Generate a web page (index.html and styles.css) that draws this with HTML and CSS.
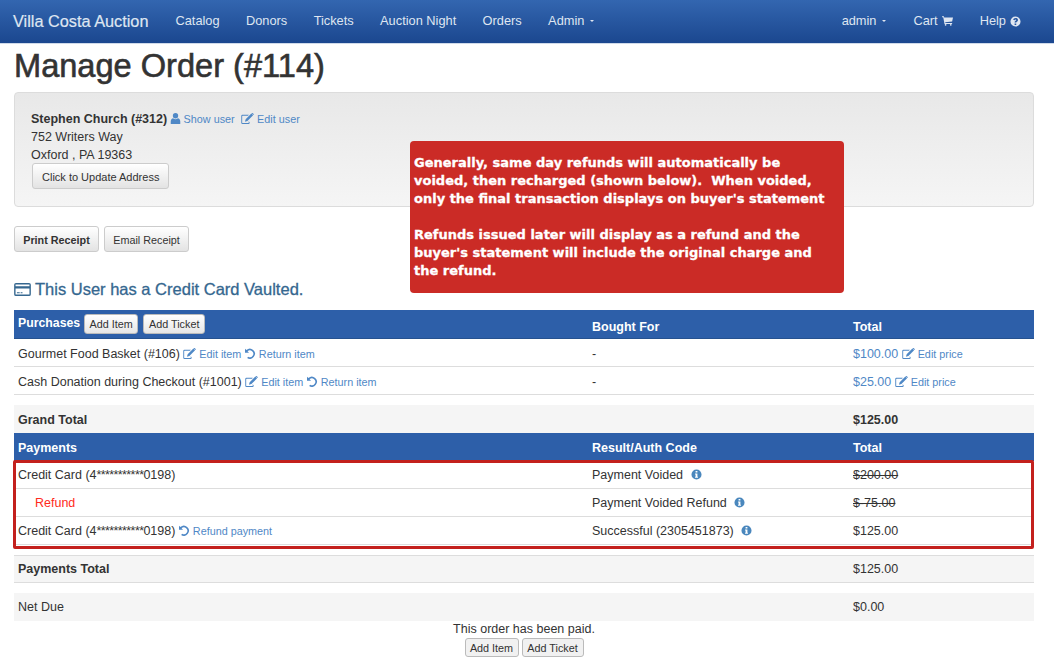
FILE: index.html
```html
<!DOCTYPE html>
<html lang="en">
<head>
<meta charset="utf-8">
<title>Manage Order (#114)</title>
<link rel="stylesheet" href="styles.css">
</head>
<body>
<svg class="defs" width="0" height="0" aria-hidden="true">
  <symbol id="i-user" viewBox="0 0 12 12"><circle cx="6" cy="3" r="2.9"/><path d="M.8 12V9.2C.8 7.2 2 6 3.4 5.7c.7.6 1.6 1 2.6 1s1.900-.4 2.600-1C10 6 11.200 7.200 11.200 9.200V12z"/></symbol>
  <symbol id="i-edit" viewBox="0 0 14 12"><path d="M9.300 10.100V11a1 1 0 0 1-1 1H1.500a1.300 1.300 0 0 1-1.300-1.300V3.300A1.300 1.300 0 0 1 1.500 2h7l-1 1H1.800a.6.6 0 0 0-.6.6v6.800c0 .4.300.6.600.6h6c.3 0 .5-.2.500-.5V9.100z"/><path d="M11.200.6l1.900 1.900-6.200 6.200-2.700.8.800-2.700zM11.800 0c.3-.2.600-.2.800 0l1.100 1.100c.3.300.3.600 0 .8l-.3.300-1.900-1.900z"/></symbol>
  <symbol id="i-undo" viewBox="0 0 12 12"><path d="M0 .8v4.400h4.400L2.800 3.600A3.700 3.700 0 1 1 3.500 9.500L2.300 10.900A5.500 5.500 0 1 0 1.500 2.300z"/></symbol>
  <symbol id="i-info" viewBox="0 0 12 12"><path fill-rule="evenodd" d="M6 .5a5.500 5.500 0 1 1 0 11 5.500 5.500 0 0 1 0-11zM5 2.200v1.700h2V2.200zM4.400 5v1.100H5v2.300h-.6v1.100h3.200V8.400H7V5z"/></symbol>
  <symbol id="i-help" viewBox="0 0 12 12"><path fill-rule="evenodd" d="M6 .5a5.500 5.500 0 1 1 0 11 5.500 5.500 0 0 1 0-11zM5 8.300v1.500h1.800V8.300zM6.100 2.200c-1.500 0-2.400.8-2.600 2l1.500.4c.1-.6.400-.9 1-.9.500 0 .8.300.8.600 0 .4-.3.600-.8.900-.7.400-1 .9-1 1.600v.400h1.800c0-.5.200-.7.700-1 .7-.5 1.200-1 1.200-1.900 0-1.400-1.200-2.100-2.600-2.100z"/></symbol>
  <symbol id="i-cart" viewBox="0 0 14 12"><path d="M0 0h2.400l.4 1.400H14l-1.100 5.300-8.800.9.200 1h8.600v1.100H3.200L1.600 1.100H0z"/><circle cx="4.600" cy="10.900" r="1.100"/><circle cx="11.200" cy="10.900" r="1.100"/></symbol>
  <symbol id="i-card" viewBox="0 0 18 14"><path fill-rule="evenodd" d="M2 0h14a2 2 0 0 1 2 2v10a2 2 0 0 1-2 2H2a2 2 0 0 1-2-2V2a2 2 0 0 1 2-2zM1.500 1.500V3.500h15V1.500zM1.500 6v6.500h15V6zM3 10h3v1H3zM7 10h2v1H7z"/></symbol>
</svg>

<header class="navbar">
  <a class="brand">Villa Costa Auction</a>
  <nav class="nav-main">
    <a>Catalog</a>
    <a>Donors</a>
    <a>Tickets</a>
    <a>Auction Night</a>
    <a>Orders</a>
    <a>Admin <i class="caret"></i></a>
  </nav>
  <nav class="nav-right">
    <a>admin <i class="caret"></i></a>
    <a>Cart <svg class="nav-ic nav-cart"><use href="#i-cart"/></svg></a>
    <a>Help <svg class="nav-ic"><use href="#i-help"/></svg></a>
  </nav>
</header>

<main class="page">
  <h1>Manage Order (#114)</h1>

  <section class="well">
    <div><strong class="buyer">Stephen Church (#312)</strong> <a class="link"><svg class="ic"><use href="#i-user"/></svg> Show user</a> <a class="link link-gap"><svg class="ic ic-edit"><use href="#i-edit"/></svg> Edit user</a></div>
    <div>752 Writers Way</div>
    <div>Oxford , PA 19363</div>
    <button class="btn btn-address">Click to Update Address</button>
  </section>

  <div class="receipt-actions">
    <button class="btn btn-receipt btn-bold">Print Receipt</button>
    <button class="btn btn-receipt">Email Receipt</button>
  </div>

  <h4 class="vaulted"><svg class="ic-card"><use href="#i-card"/></svg> This User has a Credit Card Vaulted.</h4>

  <table class="order">
    <colgroup><col class="c1"><col class="c2"><col class="c3"></colgroup>
    <tr class="head head-first">
      <th><div class="purchases"><span class="purchases-label">Purchases</span> <button class="btn btn-xs">Add Item</button> <button class="btn btn-xs">Add Ticket</button></div></th>
      <th>Bought For</th>
      <th>Total</th>
    </tr>
    <tr class="low">
      <td>Gourmet Food Basket (#106) <a class="link"><svg class="ic ic-edit"><use href="#i-edit"/></svg> Edit item</a> <a class="link"><svg class="ic"><use href="#i-undo"/></svg> Return item</a></td>
      <td>-</td>
      <td><a class="price">$100.00</a> <a class="link"><svg class="ic ic-edit"><use href="#i-edit"/></svg> Edit price</a></td>
    </tr>
    <tr class="low">
      <td>Cash Donation during Checkout (#1001) <a class="link"><svg class="ic ic-edit"><use href="#i-edit"/></svg> Edit item</a> <a class="link"><svg class="ic"><use href="#i-undo"/></svg> Return item</a></td>
      <td>-</td>
      <td><a class="price">$25.00</a> <a class="link"><svg class="ic ic-edit"><use href="#i-edit"/></svg> Edit price</a></td>
    </tr>
    <tr class="spacer"><td colspan="3"></td></tr>
    <tr class="total bold no-line low">
      <td>Grand Total</td><td></td><td>$125.00</td>
    </tr>
    <tr class="head low">
      <th>Payments</th><th>Result/Auth Code</th><th>Total</th>
    </tr>
    <tr>
      <td>Credit Card (4<span class="mask">***********</span>0198)</td>
      <td>Payment Voided <svg class="ic ic-info"><use href="#i-info"/></svg></td>
      <td><s>$200.00</s></td>
    </tr>
    <tr>
      <td class="refund">Refund</td>
      <td>Payment Voided Refund <svg class="ic ic-info"><use href="#i-info"/></svg></td>
      <td><s>$-75.00</s></td>
    </tr>
    <tr>
      <td>Credit Card (4<span class="mask">***********</span>0198) <a class="link"><svg class="ic"><use href="#i-undo"/></svg> Refund payment</a></td>
      <td>Successful (2305451873) <svg class="ic ic-info"><use href="#i-info"/></svg></td>
      <td>$125.00</td>
    </tr>
    <tr class="spacer"><td colspan="3"></td></tr>
    <tr class="total">
      <td class="bold-cell">Payments Total</td><td></td><td>$125.00</td>
    </tr>
    <tr class="spacer"><td colspan="3"></td></tr>
    <tr class="total no-line">
      <td>Net Due</td><td></td><td>$0.00</td>
    </tr>
  </table>

  <div class="paid">
    <div class="paid-note">This order has been paid.</div>
    <div class="paid-actions">
      <button class="btn btn-xs btn-flat">Add Item</button>
      <button class="btn btn-xs btn-flat">Add Ticket</button>
    </div>
  </div>
</main>

<aside class="callout">
  <p>Generally, same day refunds will automatically be voided, then recharged (shown below).&nbsp; When voided, only the final transaction displays on buyer's statement</p>
  <p>Refunds issued later will display as a refund and the buyer's statement will include the original charge and the refund.</p>
</aside>
<div class="highlight"></div>
</body>
</html>
```

FILE: styles.css
```css
* { box-sizing: border-box; }
html, body { margin: 0; padding: 0; }
body {
  position: relative;
  height: 657px;
  overflow: hidden;
  background: #fff;
  color: #333;
  font: 12.5px/18px "Liberation Sans", Arial, sans-serif;
}
.defs { position: absolute; }
a { text-decoration: none; }

.navbar {
  display: flex;
  align-items: center;
  height: 44px;
  padding: 0 20px 1px 13px;
  background: linear-gradient(#3366b0, #1b478f);
  border-bottom: 1px solid #cfdaea;
  color: #dfe6f1;
  font-size: 12.8px;
}
.brand { font-size: 16.3px; margin-right: 27px; -webkit-text-stroke: .2px #dfe6f1; }
.nav-main { display: flex; gap: 26.4px; }
.nav-right { display: flex; gap: 27px; margin-left: auto; margin-right: 13px; }
.navbar nav a { display: inline-flex; align-items: center; gap: 4px; }
.caret {
  display: inline-block;
  margin-left: 2px;
  border-top: 2.500px solid #dfe6f1;
  border-left: 2.500px solid transparent;
  border-right: 2.500px solid transparent;
}
.nav-ic { width: 11px; height: 11px; fill: #dfe6f1; }
.nav-cart { height: 10px; }

.page { padding: 0 20px 0 14px; }
h1 {
  margin: 0;
  height: 48px;
  font-size: 32.6px;
  font-weight: 500;
  line-height: 44px;
  color: #333;
  -webkit-text-stroke: .6px #333;
}
.well {
  height: 115px;
  padding: 17px 16px 0 16px;
  background: linear-gradient(#e8e8e8, #f5f5f5);
  border: 1px solid #dcdcdc;
  border-radius: 4px;
}
.buyer { margin-right: -1px; }
.btn {
  font: 11px/14px "Liberation Sans", Arial, sans-serif;
  color: #333;
  padding: 6px 9px 4px;
  height: 26px;
  background: linear-gradient(#fff, #e3e3e3);
  border: 1px solid #ccc;
  border-radius: 3px;
}
.btn-address { display: block; margin: -1px 0 0 1px; }
.btn-receipt { width: 85px; padding: 6px 0 4px; font-size: 10.8px; }
.btn-bold { font-weight: bold; }
.receipt-actions { display: flex; gap: 5px; margin-top: 19px; }
.vaulted {
  display: flex;
  align-items: center;
  gap: 4px;
  margin: 27px 0 11px;
  height: 20px;
  font-size: 16.5px;
  font-weight: 500;
  line-height: 20px;
  color: #35678f;
  -webkit-text-stroke: .3px #35678f;
}
.ic-card { width: 17px; height: 13px; fill: #35678f; }

.link { font-size: 10.8px; color: #4f88c6; }
.link-gap { margin-left: 3px; }
.ic { width: 11px; height: 11px; fill: #4f88c6; vertical-align: -1px; }
.ic-edit { width: 13px; height: 11px; }
.ic-info { margin-left: 4px; fill: #4a87bd; }
.price { color: #4f88c6; }
.mask { letter-spacing: -.6px; }

.order {
  width: 1020px;
  table-layout: fixed;
  border-collapse: separate;
  border-spacing: 0;
}
.c1 { width: 574px; }
.c2 { width: 261px; }
.c3 { width: 185px; }
.order th, .order td {
  height: 28px;
  padding: 0 4px;
  text-align: left;
  border-bottom: 1px solid #ddd;
}
.order th { font-weight: bold; vertical-align: middle; }
.order .low td, .order .low th { padding-top: 2px; }
.head th {
  color: #fff;
  background: #2d5fa9;
  border-bottom: 1px solid #26528f;
}
.order .head-first th { height: 29px; padding-top: 5px; }
.order .head-first th:first-child { padding-top: 0; }
.purchases { display: flex; align-items: center; gap: 4px; }
.purchases-label { font-size: 12.3px; padding-bottom: 2px; }
.btn-xs {
  height: 20px;
  width: 54px;
  padding: 0;
  font-size: 10.8px;
  background: linear-gradient(#fff, #e6e6e6);
  border-color: #bbb;
  font-weight: normal;
}
.btn-xs + .btn-xs { width: 62px; margin-left: 1px; }
.order .spacer td { height: 10px; padding: 0; border: 0; }
.total td { background: #f5f5f5; border-top: 1px solid #ddd; }
.bold td, .bold-cell { font-weight: bold; }
.no-line td { border-top: 0; border-bottom: 0; }
.refund { color: #ff2a20; }
.order td.refund { padding-left: 21px; }

.paid { text-align: center; height: 36px; }
.paid-note { line-height: 16px; }
.paid-actions { display: flex; justify-content: center; gap: 3px; margin-top: 1px; }
.btn-flat { background: #f1f1f1; height: 19px; }
.btn-flat + .btn-flat { margin-left: 0; }

.callout {
  position: absolute;
  left: 410px;
  top: 141px;
  width: 434px;
  height: 152px;
  padding: 13px 10px 0 4px;
  background: #cb2b26;
  border-radius: 4px;
  color: #fff;
  font: bold 13px/18px "DejaVu Sans", Verdana, sans-serif;
  -webkit-text-stroke: .3px #fff;
}
.callout p { margin: 0 0 18px; }
.highlight {
  position: absolute;
  left: 13px;
  top: 460px;
  width: 1021px;
  height: 89px;
  border: 3px solid #c3201d;
  border-radius: 2px;
  pointer-events: none;
}
```
